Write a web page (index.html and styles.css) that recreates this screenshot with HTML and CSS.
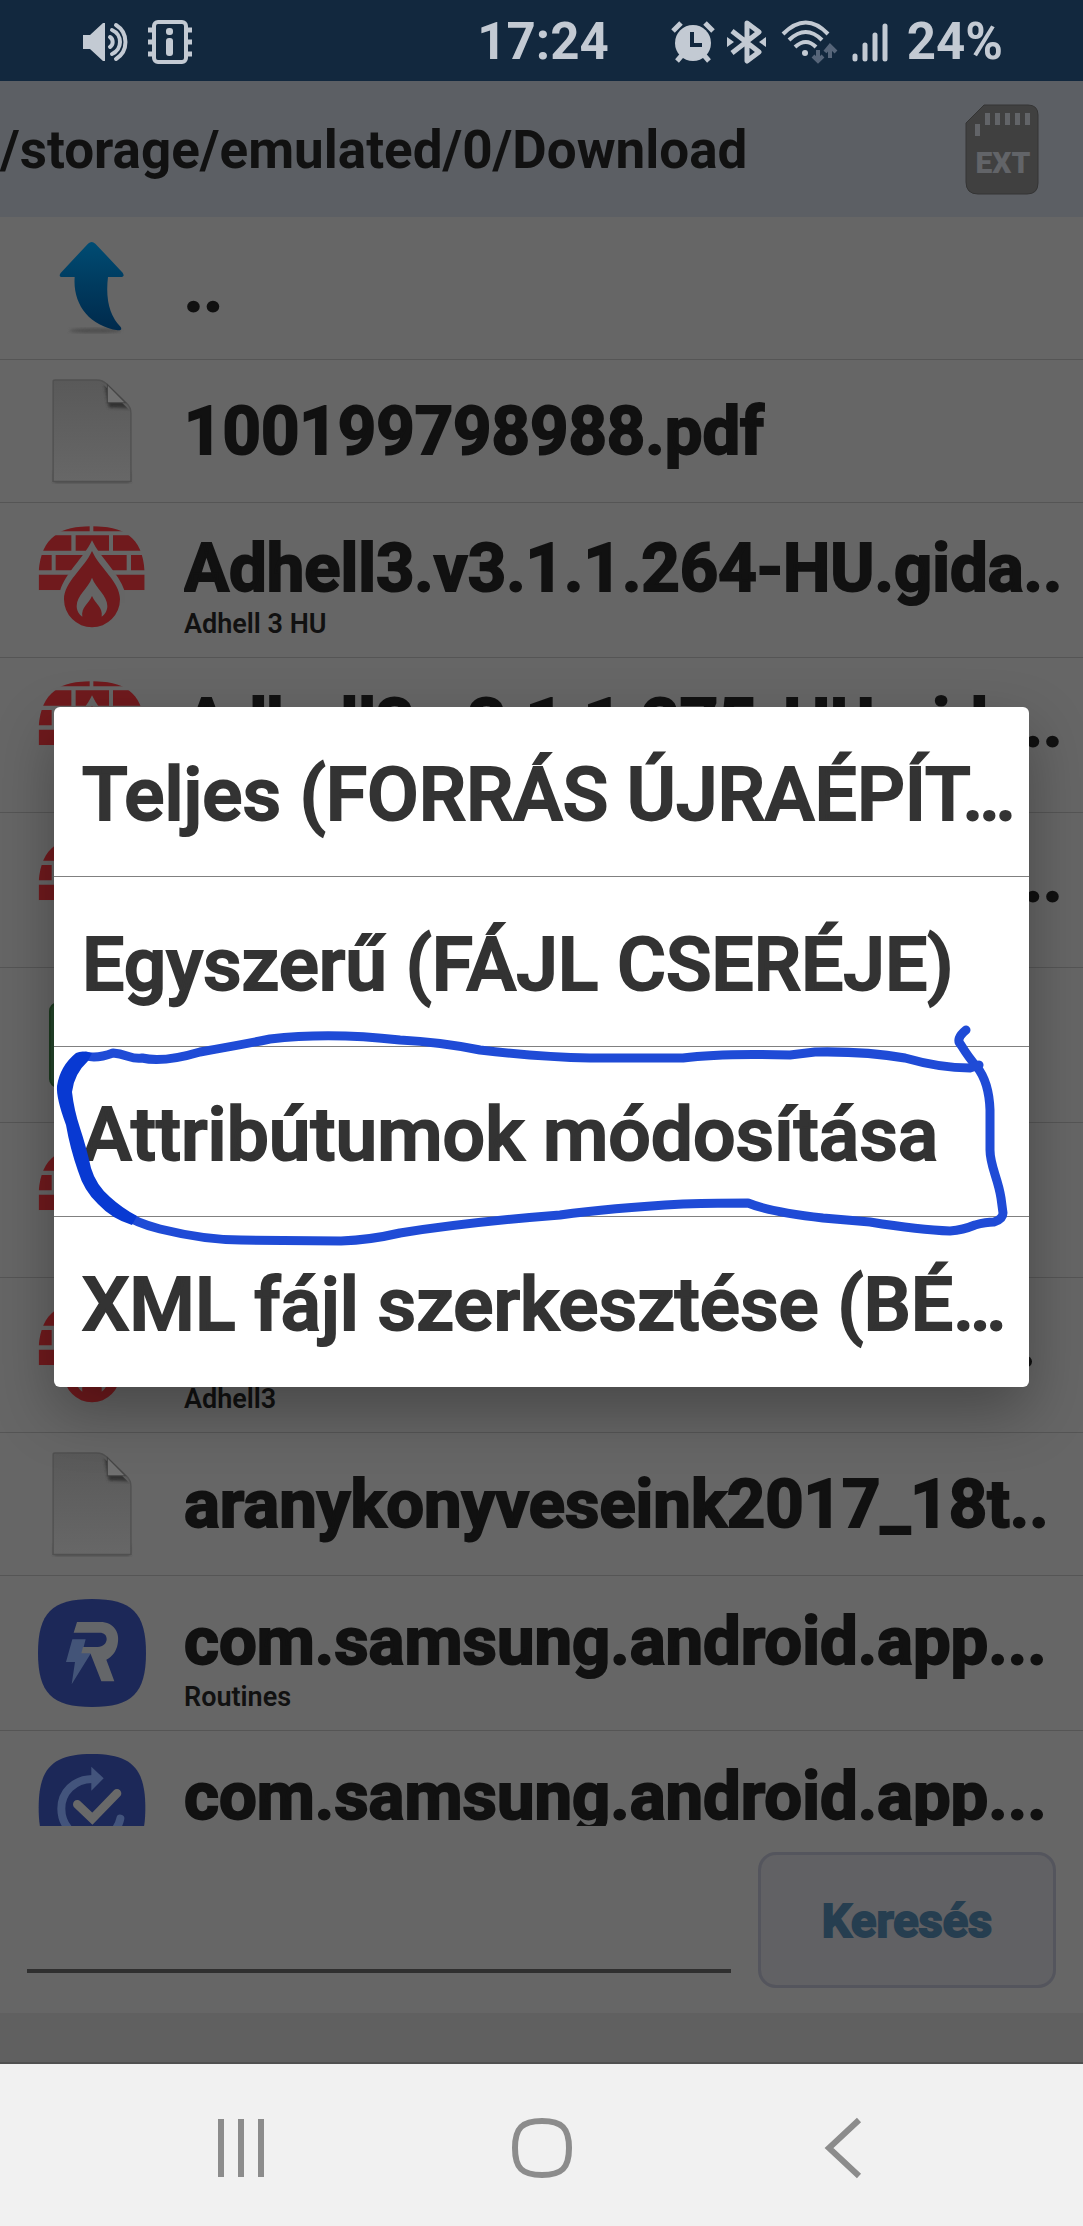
FILE: index.html
```html
<!DOCTYPE html>
<html lang="hu">
<head>
<meta charset="utf-8">
<meta name="viewport" content="width=device-width, initial-scale=1">
<title>/storage/emulated/0/Download</title>
<link rel="stylesheet" href="styles.css">
</head>
<body>
<svg class="defs" aria-hidden="true">
  <defs>
    <linearGradient id="arrow-fill" x1="0" y1="0" x2="0" y2="1">
      <stop offset="0" stop-color="#004c73"/><stop offset=".5" stop-color="#003a5e"/><stop offset="1" stop-color="#002a4c"/>
    </linearGradient>
    <linearGradient id="paper-fill" x1="0" y1="0" x2="0" y2="1">
      <stop offset="0" stop-color="#595959"/><stop offset="1" stop-color="#676767"/>
    </linearGradient>
    <filter id="soft"><feGaussianBlur stdDeviation="5"/></filter>
    <clipPath id="wall"><path d="M116 1143V1085C121 1035 135 1000 166 978C190 958 230 951 275 950C320 951 360 958 386 978C416 1000 430 1035 434 1085V1143Z"/></clipPath>
    <clipPath id="sheet"><path d="M160 506H296L392 600V810H160Z"/></clipPath>
  </defs>
  <symbol id="icon-firewall" viewBox="114 950 324 324">
    <g clip-path="url(#wall)" fill="#701a1d">
      <path d="M180 951H269V966H180ZM280 951H370V966H280ZM114 978H214V1024H114ZM227 978H327V1024H227ZM339 978H438V1024H339ZM114 1037H155V1083H114ZM167 1037H380V1083H167ZM393 1037H438V1083H393ZM114 1096H438V1143H114Z"/>
    </g>
    <path fill="#656565" d="M276 993C252 1045 196 1090 180 1145V1180H374V1145C356 1090 300 1045 276 993Z"/>
    <path fill="#701a1d" d="M276 1025C254 1075 192 1118 192 1170A84 84 0 0 0 360 1170C360 1118 298 1075 276 1025Z"/>
    <path fill="#656565" d="M276 1105C264 1138 230 1158 230 1190C230 1204 237 1215 247 1222C243 1194 266 1183 276 1160C286 1183 309 1194 305 1222C315 1215 322 1204 322 1190C322 1158 288 1138 276 1105Z"/>
  </symbol>
  <symbol id="icon-file" viewBox="154 500 244 316">
    <path filter="url(#soft)" fill="#3c3c3c" d="M162 780H390V811H162Z"/>
    <path fill="url(#paper-fill)" stroke="#505050" stroke-width="4" d="M160 511Q160 506 166 506H290Q308 506 320 518L380 576Q392 588 392 604V808H160Z"/>
    <g clip-path="url(#sheet)"><path filter="url(#soft)" fill="#333" d="M312 512L326 588L392 590L370 566Z"/></g>
    <path fill="#707070" stroke="#444" stroke-width="3" d="M322 520V574H376Z"/>
  </symbol>
</svg>

<header class="status">
  <div class="status-left">
    <svg width="46" height="44" viewBox="0 0 46 44" aria-label="Hang"><path fill="#c3cad3" d="M0 15H7L20 3H22V41H20L7 29H0Z"/><g fill="none" stroke="#c3cad3" stroke-width="4" stroke-linecap="round"><path d="M27 17A6 6 0 0 1 27 27" /><path d="M29 10A13 13 0 0 1 29 34"/><path d="M33 5A20 20 0 0 1 33 39"/></g></svg>
    <svg width="44" height="44" viewBox="0 0 44 44" aria-label="Információ"><g fill="none" stroke="#c3cad3" stroke-width="4"><rect x="6" y="2" width="32" height="40" rx="4"/><path d="M0 10H6M0 22H6M0 34H6M38 10H44M38 22H44M38 34H44" stroke-width="5"/></g><rect x="18" y="8" width="7" height="7" rx="3" fill="#c3cad3"/><rect x="18" y="18" width="7" height="18" rx="3" fill="#c3cad3"/></svg>
  </div>
  <time class="clock">17:24</time>
  <div class="status-right">
    <svg width="44" height="44" viewBox="0 0 44 44" aria-label="Ébresztő"><circle cx="22" cy="23" r="18" fill="#c3cad3"/><g stroke="#c3cad3" stroke-width="5"><path d="M2 11L10 3M34 3L42 11M6 41L12 34M38 41L32 34"/></g><path fill="none" stroke="#12283e" stroke-width="4" d="M21 12V25H31"/></svg>
    <svg width="40" height="44" viewBox="0 0 40 44" aria-label="Bluetooth"><path fill="none" stroke="#c3cad3" stroke-width="5" stroke-linejoin="round" d="M5 11L32 32L20 41V3L32 12L5 33"/><path fill="#c3cad3" d="M0 17L7 22L0 27ZM39 17L32 22L39 27Z"/></svg>
    <svg width="60" height="44" viewBox="0 0 60 44" aria-label="Wi-Fi"><g fill="none" stroke="#c3cad3" stroke-width="4"><path d="M4 14Q27 -9 49 14"/><path d="M10 20Q27 4 43 20"/><path d="M16 27Q27 17 37 27"/></g><circle cx="26" cy="33" r="3" fill="#c3cad3"/><path fill="none" stroke="#566579" stroke-width="4" d="M39 30V41M34 36L39 41L44 36M51 38V27M46 32L51 26L57 32"/></svg>
    <svg width="44" height="44" viewBox="0 0 44 44" aria-label="Térerő"><path stroke="#c3cad3" stroke-width="5" stroke-linecap="round" d="M4 36V39M14 25V39M24 15V39M34 6V39"/></svg>
    <span>24%</span>
  </div>
</header>

<main class="app">
  <div class="pathbar">
    <h1>/storage/emulated/0/Download</h1>
    <button class="card" aria-label="Külső tárhely">
      <svg width="74" height="91" viewBox="0 0 74 91"><path fill="#404040" stroke="#343434" d="M19 1H63Q73 1 73 11V79Q73 90 62 90H13Q1 90 1 78V19Z"/><path fill="#626468" d="M20 9h5v12h-5zM30 9h5v12h-5zM40 9h5v12h-5zM50 9h5v12h-5zM60 9h5v12h-5zM10 20h5v12h-5z"/><text x="38" y="69" text-anchor="middle">EXT</text></svg>
    </button>
  </div>

  <ul class="files">
    <li class="row">
      <div class="icon"><svg width="66" height="94" viewBox="181 92 198 282"><ellipse cx="290" cy="361" rx="78" ry="8" fill="#505050" filter="url(#soft)"/><path fill="url(#arrow-fill)" d="M268 100Q279 90 290 100L372 187Q380 200 366 200H328Q316 300 366 350Q372 360 358 360C270 346 222 280 228 200H192Q178 200 186 188Z"/></svg></div>
      <div class="label"><a class="name" href="#">..</a></div>
    </li>
    <li class="row">
      <div class="icon"><svg width="82" height="106"><use href="#icon-file"/></svg></div>
      <div class="label"><a class="name" href="#">100199798988.pdf</a></div>
    </li>
    <li class="row titled">
      <div class="icon"><svg width="108" height="108"><use href="#icon-firewall"/></svg></div>
      <div class="label"><a class="name" href="#">Adhell3.v3.1.1.264-HU.gida..</a><small>Adhell 3 HU</small></div>
    </li>
    <li class="row titled">
      <div class="icon"><svg width="108" height="108"><use href="#icon-firewall"/></svg></div>
      <div class="label"><a class="name" href="#">Adhell3.v3.1.1.275-HU.gida..</a></div>
    </li>
    <li class="row titled">
      <div class="icon"><svg width="108" height="108"><use href="#icon-firewall"/></svg></div>
      <div class="label"><a class="name" href="#">Adhell3.v3.1.1.276-HU.gida..</a></div>
    </li>
    <li class="row titled">
      <div class="icon"><svg width="86" height="86" viewBox="0 0 86 86"><rect x="1" y="1" width="84" height="84" rx="8" fill="#24452a" stroke="#1c3a20" stroke-width="2"/></svg></div>
    </li>
    <li class="row titled">
      <div class="icon"><svg width="108" height="108"><use href="#icon-firewall"/></svg></div>
    </li>
    <li class="row titled">
      <div class="icon"><svg width="108" height="108"><use href="#icon-firewall"/></svg></div>
      <div class="label"><a class="name" href="#">Adhell3.v3.1.1.264-EN.apk..</a><small>Adhell3</small></div>
    </li>
    <li class="row">
      <div class="icon"><svg width="82" height="106"><use href="#icon-file"/></svg></div>
      <div class="label"><a class="name" href="#">aranykonyveseink2017_18t..</a></div>
    </li>
    <li class="row titled">
      <div class="icon"><svg width="108" height="108" viewBox="113 539 324 324"><path fill="#1c2858" d="M275 539C395 539 437 581 437 701S395 863 275 863S113 821 113 701S155 539 275 539Z"/><path fill="#435478" d="M216 660H256L246 698H274L214 795L224 728H197Z"/><path fill="#646669" d="M230 608H300C340 608 360 640 352 674C348 696 336 712 318 721L342 786H303L270 702H243L248 683H292C308 683 319 672 319 659C319 647 311 640 298 640H220Z"/></svg></div>
      <div class="label"><a class="name" href="#">com.samsung.android.app...</a><small>Routines</small></div>
    </li>
    <li class="row titled">
      <div class="icon"><svg width="108" height="108" viewBox="113 1004 324 324"><path fill="#1c2858" d="M275 1004C393 1004 435 1046 435 1166S393 1328 275 1328S115 1286 115 1166S157 1004 275 1004Z"/><path fill="none" stroke="#43547c" stroke-width="24" stroke-linecap="round" d="M276 1079C220 1080 183 1120 183 1168C183 1220 225 1262 275 1262C318 1262 352 1236 360 1198"/><path fill="#43547c" d="M273 1042L310 1077L273 1114Z"/><path fill="none" stroke="#696969" stroke-width="26" stroke-linecap="round" d="M231 1155L276 1198L350 1122"/></svg></div>
      <div class="label"><a class="name" href="#">com.samsung.android.app...</a></div>
    </li>
  </ul>

  <form class="search">
    <input type="text" aria-label="Keresés">
    <button type="button">Keresés</button>
  </form>

  <div class="layer">
    <div class="dialog" role="dialog" aria-label="Szerkesztés">
      <button>Teljes (FORRÁS ÚJRAÉPÍT…</button>
      <button>Egyszerű (FÁJL CSERÉJE)</button>
      <button>Attribútumok módosítása</button>
      <button>XML fájl szerkesztése (BÉ…</button>
      <svg class="ink" viewBox="54 707 975 680" aria-hidden="true">
        <g fill="none" stroke="#1f4bd6" stroke-linecap="round" stroke-linejoin="round">
          <path stroke-width="9" d="M966 1030Q955 1039 961 1045Q969 1058 977 1067Q989 1082 990 1110V1150C990 1166 998 1178 1001 1198L1003 1213Q1003 1219 994 1222Q986 1222 975 1225Q963 1230 950 1231Q920 1230 870 1222L823 1218Q770 1212 748 1203Q720 1203 683 1204Q610 1208 560 1215Q470 1222 400 1233Q370 1240 341 1241L241 1240Q205 1240 160 1229Q136 1223 120 1212"/>
          <path stroke-width="9" d="M86 1056Q97 1059 113 1053C127 1054 132 1060 142 1058Q163 1063 200 1052Q240 1045 270 1039Q330 1032 400 1040Q440 1042 480 1050Q540 1057 590 1058L683 1058Q720 1053 790 1055L815 1052Q865 1051 905 1058Q940 1068 970 1068L979 1065"/>
        </g>
        <path fill="#0839d2" d="M76 1053Q82 1050 92 1053L88 1061Q74 1074 72 1092Q74 1110 80 1128Q86 1146 91 1168Q96 1185 110 1197Q122 1208 137 1216L132 1225Q112 1219 98 1204Q84 1191 78 1171Q70 1148 66 1125Q56 1098 57 1086Q60 1066 76 1053Z"/>
      </svg>
    </div>
  </div>
</main>

<footer class="footer">
  <div class="strip"></div>
  <nav class="nav">
    <button aria-label="Legutóbbiak"><svg width="48" height="58" viewBox="0 0 48 58"><path stroke="#8c8c8c" stroke-width="6" d="M4 0V58M24 0V58M44 0V58"/></svg></button>
    <button aria-label="Kezdőlap"><svg width="60" height="60" viewBox="0 0 60 60"><path fill="none" stroke="#8c8c8c" stroke-width="6" d="M30 3C50 3 57 10 57 30S50 57 30 57S3 50 3 30S10 3 30 3Z"/></svg></button>
    <button aria-label="Vissza"><svg width="38" height="62" viewBox="0 0 38 62"><path fill="none" stroke="#8c8c8c" stroke-width="6" d="M35 3L5 31L35 59"/></svg></button>
  </nav>
</footer>
</body>
</html>
```
FILE: styles.css
```css
* {
  box-sizing: border-box;
}

body {
  display: flex;
  flex-direction: column;
  height: 100vh;
  margin: 0;
  background: #666;
  color: #111;
  font-family: Roboto, "Liberation Sans", sans-serif;
}

button {
  border: 0;
  padding: 0;
  background: none;
  color: inherit;
  font: inherit;
}

svg {
  display: block;
  flex: none;
}

.defs {
  position: absolute;
  width: 0;
  height: 0;
}

/* Status bar */
.status {
  display: grid;
  grid-template-columns: 1fr auto 1fr;
  align-items: center;
  flex: none;
  height: 81px;
  padding: 2px 80px 0 83px;
  background: #12283e;
  color: #c3cad3;
  font-size: 51px;
  font-weight: 700;
}

.status-left,
.status-right {
  display: flex;
  align-items: center;
}

.status-left {
  gap: 19px;
}

.status-right {
  justify-content: flex-end;
  gap: 12px;
}

/* File browser */
.app {
  position: relative;
  display: flex;
  flex: 1;
  flex-direction: column;
  min-height: 0;
}

.pathbar {
  display: flex;
  align-items: center;
  justify-content: space-between;
  flex: none;
  height: 136px;
  padding-right: 44px;
  background: #5c5f64;
}

.pathbar h1 {
  margin: 0;
  padding-top: 2px;
  font-size: 53px;
  font-weight: 700;
}

.card text {
  fill: #626468;
  font-size: 30px;
  font-weight: 900;
}

.files {
  flex: 1;
  min-height: 0;
  margin: 0;
  padding: 0;
  overflow: hidden;
  list-style: none;
}

.row {
  display: flex;
  align-items: center;
  gap: 38px;
  height: 143px;
  padding-left: 38px;
  border-bottom: 1px solid #555;
}

.row.titled {
  height: 155px;
}

.icon {
  display: flex;
  justify-content: center;
  flex: none;
  width: 108px;
}

.label {
  flex: 1;
  min-width: 0;
}

.titled .label {
  height: 120px;
  padding-top: 8px;
}

.name {
  display: block;
  overflow: hidden;
  color: inherit;
  font-size: 67px;
  font-weight: 700;
  line-height: 80px;
  text-decoration: none;
  white-space: nowrap;
  -webkit-text-stroke: 2px #111;
}

.label small {
  display: block;
  font-size: 27px;
  font-weight: 600;
  line-height: 32px;
}

/* Search */
.search {
  display: flex;
  flex: none;
  gap: 27px;
  padding: 26px 27px 25px;
}

.search input {
  flex: 1;
  min-width: 0;
  margin-bottom: 15px;
  border: 0;
  border-bottom: 4px solid #2f2f2f;
  border-radius: 0;
  background: none;
  font: inherit;
  font-size: 48px;
  outline: 0;
}

.search button {
  width: 298px;
  height: 136px;
  border: 3px solid #54555d;
  border-radius: 18px;
  background: #616164;
  color: #263e50;
  font-size: 47px;
  font-weight: 700;
  -webkit-text-stroke: 2px #263e50;
}

/* Dialog */
.layer {
  position: absolute;
  inset: 0;
  display: grid;
  grid-template-columns: minmax(0, 1fr);
  align-items: center;
  padding: 0 54px;
}

.dialog {
  position: relative;
  border-radius: 6px;
  background: #fff;
  box-shadow: 0 24px 60px rgba(0, 0, 0, 0.3);
  color: #333;
}

.dialog button {
  display: block;
  width: 100%;
  height: 170px;
  padding: 4px 0 0 28px;
  overflow: hidden;
  border-bottom: 1px solid #808080;
  font-size: 75px;
  font-weight: 500;
  text-align: left;
  white-space: nowrap;
  -webkit-text-stroke: 2px #333;
}

.dialog button:last-of-type {
  border-bottom: 0;
}

.ink {
  position: absolute;
  inset: 0;
  width: 100%;
  height: 100%;
  overflow: visible;
  pointer-events: none;
}

/* System navigation */
.footer {
  flex: none;
}

.strip {
  height: 51px;
  border-bottom: 2px solid #505050;
  background: #606060;
}

.nav {
  display: grid;
  grid-template-columns: repeat(3, 1fr);
  height: 162px;
  padding: 6px 90px 0;
  background: #f1f1f1;
}

.nav button {
  display: flex;
  align-items: center;
  justify-content: center;
}
```
